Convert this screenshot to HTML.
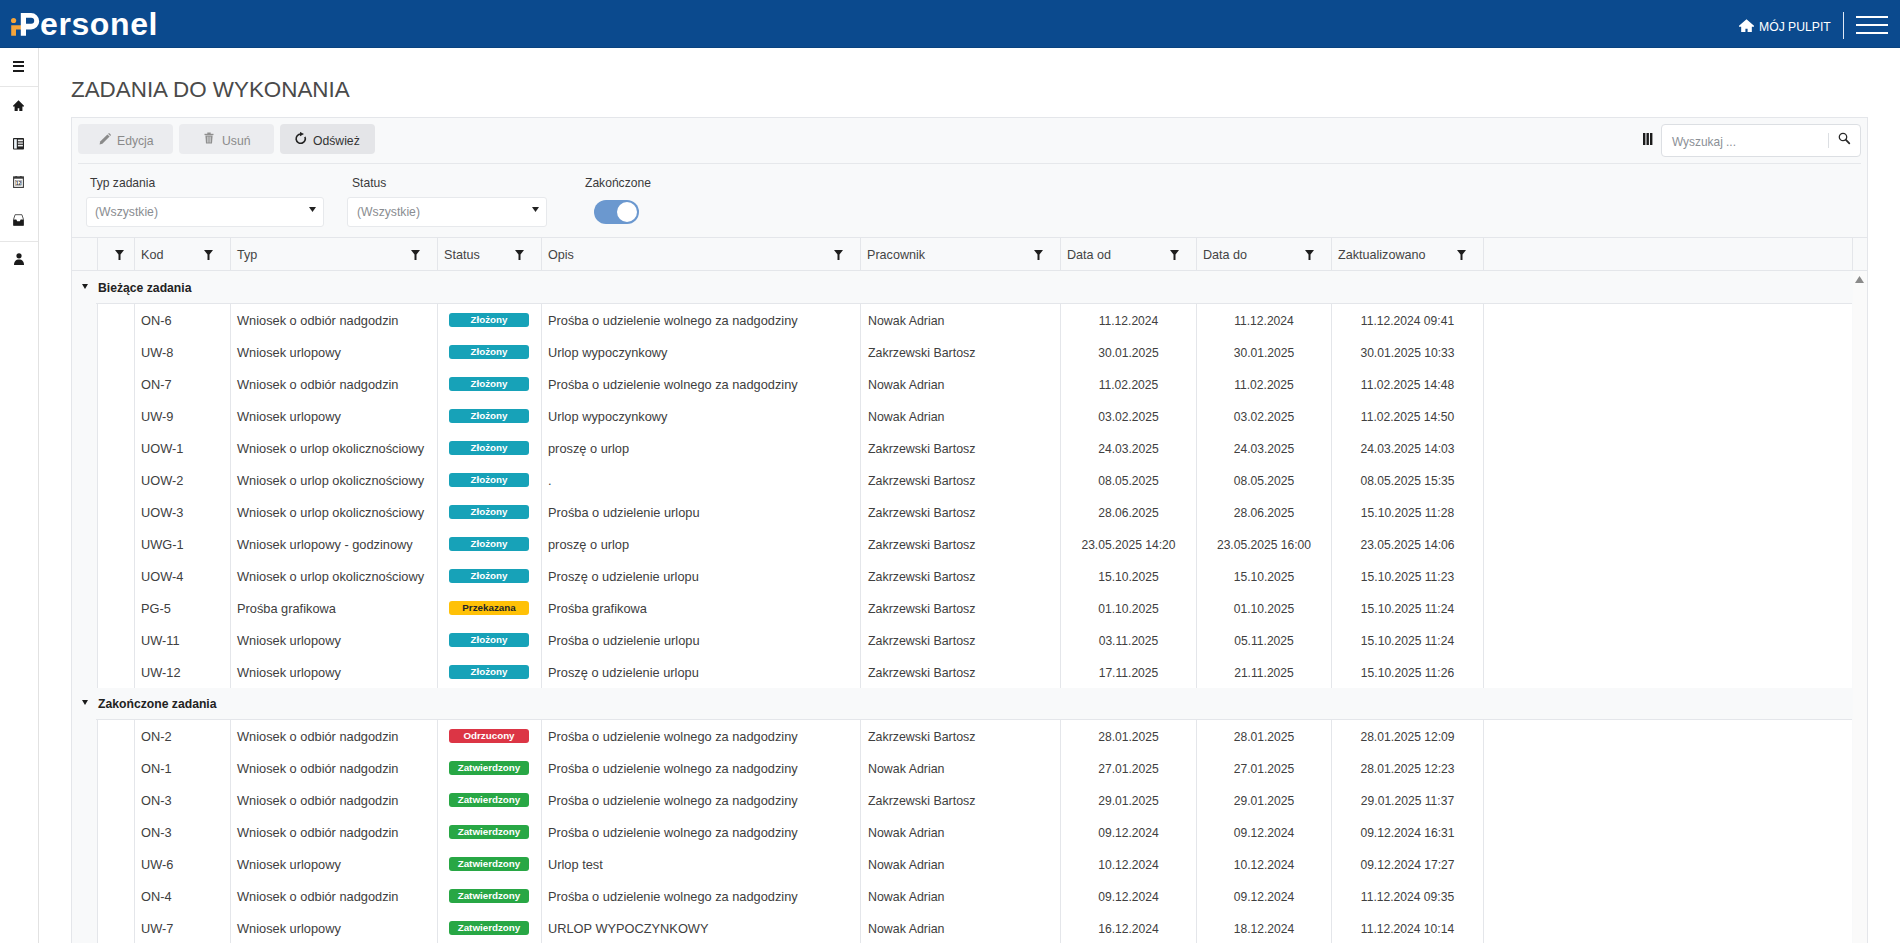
<!DOCTYPE html><html><head><meta charset="utf-8"><title>Zadania do wykonania</title><style>
*{box-sizing:border-box}
svg{display:block}
html,body{margin:0;padding:0}
body{width:1900px;height:943px;overflow:hidden;position:relative;background:#fff;font-family:"Liberation Sans",sans-serif;color:#333}
.a{position:absolute}
.hdr{left:0;top:0;width:1900px;height:48px;background:#0b4a8e;border-bottom:1px solid #0a437f}
.logo{left:40px;top:4px;font-size:32px;font-weight:700;color:#fff;line-height:40px;letter-spacing:0.6px}
.side{left:0;top:48px;width:39px;height:895px;border-right:1px solid #e2e2e2;background:#fff}
.hl{height:1px;background:#e6e6e6}
.vl{width:1px;background:#e4e6ea}
.title{left:71px;top:74.5px;font-size:22.4px;letter-spacing:0px;color:#4a4a4a;line-height:30px;white-space:nowrap}
.panel{left:71px;top:117px;width:1797px;height:840px;background:#f8f9fa;border:1px solid #e4e6ea}
.btn{top:124px;width:95px;height:30px;background:#e9eaed;border-radius:4px}
.btxt{font-size:12.2px;line-height:30px;white-space:nowrap}
.lbl{font-size:12.1px;color:#3a3a3a;line-height:16px;white-space:nowrap}
.sel{top:197px;height:30px;background:#fff;border:1px solid #e7e9ec;border-radius:3px}
.selt{font-size:12.2px;color:#8a8d91;line-height:28px;white-space:nowrap}
.ht{font-size:12.6px;color:#444;line-height:32px;white-space:nowrap}
.dt{font-size:12.8px;color:#404040;line-height:32px;white-space:nowrap}
.dd{font-size:12.1px;color:#404040;line-height:32px;white-space:nowrap;text-align:center}
.gt{font-size:12.2px;font-weight:700;color:#222;line-height:32px;white-space:nowrap}
.bd{height:14px;width:80px;border-radius:3px;font-size:9.8px;font-weight:700;text-align:center;line-height:14px;white-space:nowrap}
</style></head><body>
<div class="a hdr"></div>
<svg class="a" style="left:0;top:0" width="45" height="48" viewBox="0 0 45 48"><circle cx="13.6" cy="20.5" r="2.6" fill="#f5a43a"/><path d="M11.2 25.3H21V29.4H16V35.8H11.2Z" fill="#f5a43a"/><path fill-rule="evenodd" d="M20.8 13H31A8.2 8.2 0 0 1 31 29.4H26V35.8H20.8ZM26 17.7H31.2A3 3 0 0 1 31.2 23.7H26Z" fill="#fff"/></svg>
<div class="a logo">ersonel</div>
<svg class="a" style="left:1739px;top:19px" width="15" height="13" viewBox="0 0 11 11" preserveAspectRatio="none"><path d="M5.5 0.3L11 5.8V6.6H9.4V11H6.3V8.2H4.7V11H1.6V6.6H0V5.8Z" fill="#fff"/></svg>
<div class="a" style="left:1759px;top:17px;font-size:12.2px;color:#fff;line-height:20px;white-space:nowrap">MÓJ PULPIT</div>
<div class="a" style="left:1843px;top:12px;width:1px;height:27px;background:#dfe9f5"></div>
<div class="a" style="left:1856px;top:16px;width:32px;height:2px;background:#fff"></div>
<div class="a" style="left:1856px;top:24px;width:32px;height:2px;background:#fff"></div>
<div class="a" style="left:1856px;top:32px;width:32px;height:2px;background:#fff"></div>
<div class="a side"></div>
<div class="a hl" style="left:0;top:86px;width:38px"></div>
<div class="a hl" style="left:0;top:241px;width:38px"></div>
<div class="a" style="left:13px;top:61px;width:11px;height:2px;background:#1b1b1b"></div>
<div class="a" style="left:13px;top:65px;width:11px;height:2px;background:#1b1b1b"></div>
<div class="a" style="left:13px;top:70px;width:11px;height:2px;background:#1b1b1b"></div>
<svg class="a" style="left:13px;top:100px" width="11" height="11" viewBox="0 0 11 11"><path d="M5.5 0.3L11 5.8V6.6H9.4V11H6.3V8.2H4.7V11H1.6V6.6H0V5.8Z" fill="#1b1b1b"/></svg>
<svg class="a" style="left:13px;top:138px" width="11" height="12" viewBox="0 0 11 12"><rect x="0" y="0" width="11" height="11.6" rx="0.8" fill="#222"/><rect x="1.1" y="1.2" width="2.7" height="9.4" fill="#eef6fb"/><rect x="4.9" y="1.6" width="5" height="1.7" fill="#f4f4f4"/><rect x="4.9" y="4.4" width="5" height="1.3" fill="#f0f0f0"/><rect x="4.9" y="6.8" width="5" height="1.6" fill="#f0f0f0"/></svg>
<svg class="a" style="left:13px;top:175px" width="11" height="13" viewBox="0 0 11 13"><rect x="0.6" y="1.9" width="9.8" height="10.5" fill="none" stroke="#3a3a3a" stroke-width="1.1"/><rect x="0.6" y="1.9" width="9.8" height="1.8" fill="#3a3a3a"/><circle cx="3.2" cy="2" r="1.1" fill="#3a3a3a"/><circle cx="7.8" cy="2" r="1.1" fill="#3a3a3a"/><rect x="2.3" y="5.6" width="6.4" height="5" fill="none" stroke="#777" stroke-width="0.5"/><text x="5.5" y="10.2" font-size="5" font-weight="700" font-family="Liberation Sans" text-anchor="middle" fill="#333">12</text></svg>
<svg class="a" style="left:13px;top:214px" width="11" height="12" viewBox="0 0 11 12"><path d="M2.1 0.7H8.9L10.5 5.5V11.4H0.5V5.5Z" fill="none" stroke="#444" stroke-width="0.9"/><path d="M0.5 5.5H3.3L4.2 7.2H6.8L7.7 5.5H10.5V11.4H0.5Z" fill="#1b1b1b"/></svg>
<svg class="a" style="left:14px;top:253px" width="10" height="12" viewBox="0 0 10 12"><circle cx="5" cy="2.8" r="2.6" fill="#1b1b1b"/><path d="M0 12C0 8.5 1.8 6.5 5 6.5S10 8.5 10 12Z" fill="#1b1b1b"/></svg>
<div class="a title">ZADANIA DO WYKONANIA</div>
<div class="a panel"></div>
<div class="a btn" style="left:78px;background:#ebecef"></div>
<div class="a btn" style="left:179px;background:#ebecef"></div>
<div class="a btn" style="left:280px;background:#e4e5e8"></div>
<svg class="a" style="left:99px;top:133px" width="12" height="12" viewBox="0 0 12 12"><path d="M0.6 11.4L1.2 8.6L8.4 1.4L10.6 3.6L3.4 10.8Z" fill="#8a8a8a"/><path d="M9.1 0.7L9.6 0.3Q10 0 10.4 0.3L11.7 1.6Q12 2 11.7 2.4L11.3 2.9Z" fill="#8a8a8a"/></svg>
<div class="a btxt" style="left:117px;top:126px;color:#8a8a8a">Edycja</div>
<svg class="a" style="left:204px;top:132px" width="10" height="12" viewBox="0 0 10 12"><rect x="0.5" y="1.8" width="9" height="1.3" fill="#8f8f8f"/><rect x="3.3" y="0.5" width="3.4" height="1.6" fill="#8f8f8f"/><path d="M1.4 3.6H8.6L8 11.5H2Z" fill="#8f8f8f"/><path d="M3.6 4.6V10.5M5 4.6V10.5M6.4 4.6V10.5" stroke="#ebecef" stroke-width="0.6"/></svg>
<div class="a btxt" style="left:222px;top:126px;color:#8a8a8a">Usuń</div>
<svg class="a" style="left:294px;top:132px" width="14" height="14" viewBox="0 0 14 14"><path d="M6.7 2.1A4.6 4.6 0 1 0 10.9 4.8" fill="none" stroke="#222" stroke-width="1.6"/><path d="M6 -0.1L10 2.1L6 4.3Z" fill="#222"/></svg>
<div class="a btxt" style="left:313px;top:126px;color:#333">Odśwież</div>
<svg class="a" style="left:1643px;top:133px" width="10" height="12" viewBox="0 0 10 12"><rect x="0" y="0" width="2.4" height="12" fill="#1b1b1b"/><rect x="3.5" y="0" width="2.4" height="12" fill="#1b1b1b"/><rect x="7" y="0" width="2.4" height="12" fill="#1b1b1b"/></svg>
<div class="a" style="left:1661px;top:124px;width:200px;height:33px;background:#fff;border:1px solid #dcdfe3;border-radius:4px"></div>
<div class="a" style="left:1672px;top:132px;font-size:11.9px;color:#8b9096;line-height:20px;white-space:nowrap">Wyszukaj ...</div>
<div class="a" style="left:1828px;top:133px;width:1px;height:15px;background:#dcdfe3"></div>
<svg class="a" style="left:1838px;top:132px" width="13" height="13" viewBox="0 0 13 13"><circle cx="5" cy="5" r="3.7" fill="none" stroke="#2a2a2a" stroke-width="1.3"/><path d="M7.7 7.7L11.3 11.3" stroke="#2a2a2a" stroke-width="1.8" stroke-linecap="round"/></svg>
<div class="a hl" style="left:78px;top:163px;width:1783px;background:#e6e8eb"></div>
<div class="a lbl" style="left:90px;top:175px">Typ zadania</div>
<div class="a lbl" style="left:352px;top:175px">Status</div>
<div class="a lbl" style="left:585px;top:175px">Zakończone</div>
<div class="a sel" style="left:86px;width:238px"></div>
<div class="a selt" style="left:95px;top:198px">(Wszystkie)</div>
<svg class="a" style="left:309px;top:207px" width="7" height="5" viewBox="0 0 7 5"><path d="M0 0H7L3.5 5Z" fill="#222"/></svg>
<div class="a sel" style="left:347px;width:200px"></div>
<div class="a selt" style="left:357px;top:198px">(Wszystkie)</div>
<svg class="a" style="left:532px;top:207px" width="7" height="5" viewBox="0 0 7 5"><path d="M0 0H7L3.5 5Z" fill="#222"/></svg>
<div class="a" style="left:594px;top:200px;width:45px;height:24px;border-radius:12px;background:#6b98cf"></div>
<div class="a" style="left:617px;top:202px;width:20px;height:20px;border-radius:10px;background:#fff"></div>
<div class="a hl" style="left:72px;top:237px;width:1795px;background:#e4e6ea"></div>
<div class="a hl" style="left:72px;top:270px;width:1795px;background:#e4e6ea"></div>
<div class="a vl" style="left:97px;top:238px;height:32px"></div>
<div class="a vl" style="left:134px;top:238px;height:32px"></div>
<div class="a vl" style="left:230px;top:238px;height:32px"></div>
<div class="a vl" style="left:437px;top:238px;height:32px"></div>
<div class="a vl" style="left:541px;top:238px;height:32px"></div>
<div class="a vl" style="left:860px;top:238px;height:32px"></div>
<div class="a vl" style="left:1060px;top:238px;height:32px"></div>
<div class="a vl" style="left:1196px;top:238px;height:32px"></div>
<div class="a vl" style="left:1331px;top:238px;height:32px"></div>
<div class="a vl" style="left:1483px;top:238px;height:32px"></div>
<div class="a vl" style="left:1852px;top:238px;height:32px"></div>
<div class="a" style="left:115px;top:250px"><svg width="9" height="10" viewBox="0 0 9 10"><path d="M0 0H9L5.5 4.4V10H3.5V4.4Z" fill="#1e1e1e"/></svg></div>
<div class="a ht" style="left:141px;top:239px">Kod</div>
<div class="a" style="left:204px;top:250px"><svg width="9" height="10" viewBox="0 0 9 10"><path d="M0 0H9L5.5 4.4V10H3.5V4.4Z" fill="#1e1e1e"/></svg></div>
<div class="a ht" style="left:237px;top:239px">Typ</div>
<div class="a" style="left:411px;top:250px"><svg width="9" height="10" viewBox="0 0 9 10"><path d="M0 0H9L5.5 4.4V10H3.5V4.4Z" fill="#1e1e1e"/></svg></div>
<div class="a ht" style="left:444px;top:239px">Status</div>
<div class="a" style="left:515px;top:250px"><svg width="9" height="10" viewBox="0 0 9 10"><path d="M0 0H9L5.5 4.4V10H3.5V4.4Z" fill="#1e1e1e"/></svg></div>
<div class="a ht" style="left:548px;top:239px">Opis</div>
<div class="a" style="left:834px;top:250px"><svg width="9" height="10" viewBox="0 0 9 10"><path d="M0 0H9L5.5 4.4V10H3.5V4.4Z" fill="#1e1e1e"/></svg></div>
<div class="a ht" style="left:867px;top:239px">Pracownik</div>
<div class="a" style="left:1034px;top:250px"><svg width="9" height="10" viewBox="0 0 9 10"><path d="M0 0H9L5.5 4.4V10H3.5V4.4Z" fill="#1e1e1e"/></svg></div>
<div class="a ht" style="left:1067px;top:239px">Data od</div>
<div class="a" style="left:1170px;top:250px"><svg width="9" height="10" viewBox="0 0 9 10"><path d="M0 0H9L5.5 4.4V10H3.5V4.4Z" fill="#1e1e1e"/></svg></div>
<div class="a ht" style="left:1203px;top:239px">Data do</div>
<div class="a" style="left:1305px;top:250px"><svg width="9" height="10" viewBox="0 0 9 10"><path d="M0 0H9L5.5 4.4V10H3.5V4.4Z" fill="#1e1e1e"/></svg></div>
<div class="a ht" style="left:1338px;top:239px">Zaktualizowano</div>
<div class="a" style="left:1457px;top:250px"><svg width="9" height="10" viewBox="0 0 9 10"><path d="M0 0H9L5.5 4.4V10H3.5V4.4Z" fill="#1e1e1e"/></svg></div>
<div class="a hl" style="left:96px;top:303px;width:1756px;background:#e4e6ea"></div>
<svg class="a" style="left:82px;top:284px" width="6" height="5" viewBox="0 0 6 5"><path d="M0 0H6L3 5Z" fill="#1b1b1b"/></svg>
<div class="a gt" style="left:98px;top:272px">Bieżące zadania</div>
<div class="a" style="left:98px;top:304px;width:1754px;height:384px;background:#fff"></div>
<div class="a vl" style="left:97px;top:304px;height:384px"></div>
<div class="a vl" style="left:134px;top:304px;height:384px"></div>
<div class="a vl" style="left:230px;top:304px;height:384px"></div>
<div class="a vl" style="left:437px;top:304px;height:384px"></div>
<div class="a vl" style="left:541px;top:304px;height:384px"></div>
<div class="a vl" style="left:860px;top:304px;height:384px"></div>
<div class="a vl" style="left:1060px;top:304px;height:384px"></div>
<div class="a vl" style="left:1196px;top:304px;height:384px"></div>
<div class="a vl" style="left:1331px;top:304px;height:384px"></div>
<div class="a vl" style="left:1483px;top:304px;height:384px"></div>
<div class="a dt" style="left:141px;top:305px">ON-6</div>
<div class="a dt" style="left:237px;top:305px">Wniosek o odbiór nadgodzin</div>
<div class="a bd" style="left:449px;top:313px;background:#17a2b8;color:#fff">Złożony</div>
<div class="a dt" style="left:548px;top:305px">Prośba o udzielenie wolnego za nadgodziny</div>
<div class="a dt" style="left:868px;top:305px;font-size:12.4px">Nowak Adrian</div>
<div class="a dd" style="left:1061px;width:135px;top:305px">11.12.2024</div>
<div class="a dd" style="left:1197px;width:134px;top:305px">11.12.2024</div>
<div class="a dd" style="left:1332px;width:151px;top:305px">11.12.2024 09:41</div>
<div class="a dt" style="left:141px;top:337px">UW-8</div>
<div class="a dt" style="left:237px;top:337px">Wniosek urlopowy</div>
<div class="a bd" style="left:449px;top:345px;background:#17a2b8;color:#fff">Złożony</div>
<div class="a dt" style="left:548px;top:337px">Urlop wypoczynkowy</div>
<div class="a dt" style="left:868px;top:337px;font-size:12.4px">Zakrzewski Bartosz</div>
<div class="a dd" style="left:1061px;width:135px;top:337px">30.01.2025</div>
<div class="a dd" style="left:1197px;width:134px;top:337px">30.01.2025</div>
<div class="a dd" style="left:1332px;width:151px;top:337px">30.01.2025 10:33</div>
<div class="a dt" style="left:141px;top:369px">ON-7</div>
<div class="a dt" style="left:237px;top:369px">Wniosek o odbiór nadgodzin</div>
<div class="a bd" style="left:449px;top:377px;background:#17a2b8;color:#fff">Złożony</div>
<div class="a dt" style="left:548px;top:369px">Prośba o udzielenie wolnego za nadgodziny</div>
<div class="a dt" style="left:868px;top:369px;font-size:12.4px">Nowak Adrian</div>
<div class="a dd" style="left:1061px;width:135px;top:369px">11.02.2025</div>
<div class="a dd" style="left:1197px;width:134px;top:369px">11.02.2025</div>
<div class="a dd" style="left:1332px;width:151px;top:369px">11.02.2025 14:48</div>
<div class="a dt" style="left:141px;top:401px">UW-9</div>
<div class="a dt" style="left:237px;top:401px">Wniosek urlopowy</div>
<div class="a bd" style="left:449px;top:409px;background:#17a2b8;color:#fff">Złożony</div>
<div class="a dt" style="left:548px;top:401px">Urlop wypoczynkowy</div>
<div class="a dt" style="left:868px;top:401px;font-size:12.4px">Nowak Adrian</div>
<div class="a dd" style="left:1061px;width:135px;top:401px">03.02.2025</div>
<div class="a dd" style="left:1197px;width:134px;top:401px">03.02.2025</div>
<div class="a dd" style="left:1332px;width:151px;top:401px">11.02.2025 14:50</div>
<div class="a dt" style="left:141px;top:433px">UOW-1</div>
<div class="a dt" style="left:237px;top:433px">Wniosek o urlop okolicznościowy</div>
<div class="a bd" style="left:449px;top:441px;background:#17a2b8;color:#fff">Złożony</div>
<div class="a dt" style="left:548px;top:433px">proszę o urlop</div>
<div class="a dt" style="left:868px;top:433px;font-size:12.4px">Zakrzewski Bartosz</div>
<div class="a dd" style="left:1061px;width:135px;top:433px">24.03.2025</div>
<div class="a dd" style="left:1197px;width:134px;top:433px">24.03.2025</div>
<div class="a dd" style="left:1332px;width:151px;top:433px">24.03.2025 14:03</div>
<div class="a dt" style="left:141px;top:465px">UOW-2</div>
<div class="a dt" style="left:237px;top:465px">Wniosek o urlop okolicznościowy</div>
<div class="a bd" style="left:449px;top:473px;background:#17a2b8;color:#fff">Złożony</div>
<div class="a dt" style="left:548px;top:465px">.</div>
<div class="a dt" style="left:868px;top:465px;font-size:12.4px">Zakrzewski Bartosz</div>
<div class="a dd" style="left:1061px;width:135px;top:465px">08.05.2025</div>
<div class="a dd" style="left:1197px;width:134px;top:465px">08.05.2025</div>
<div class="a dd" style="left:1332px;width:151px;top:465px">08.05.2025 15:35</div>
<div class="a dt" style="left:141px;top:497px">UOW-3</div>
<div class="a dt" style="left:237px;top:497px">Wniosek o urlop okolicznościowy</div>
<div class="a bd" style="left:449px;top:505px;background:#17a2b8;color:#fff">Złożony</div>
<div class="a dt" style="left:548px;top:497px">Prośba o udzielenie urlopu</div>
<div class="a dt" style="left:868px;top:497px;font-size:12.4px">Zakrzewski Bartosz</div>
<div class="a dd" style="left:1061px;width:135px;top:497px">28.06.2025</div>
<div class="a dd" style="left:1197px;width:134px;top:497px">28.06.2025</div>
<div class="a dd" style="left:1332px;width:151px;top:497px">15.10.2025 11:28</div>
<div class="a dt" style="left:141px;top:529px">UWG-1</div>
<div class="a dt" style="left:237px;top:529px">Wniosek urlopowy - godzinowy</div>
<div class="a bd" style="left:449px;top:537px;background:#17a2b8;color:#fff">Złożony</div>
<div class="a dt" style="left:548px;top:529px">proszę o urlop</div>
<div class="a dt" style="left:868px;top:529px;font-size:12.4px">Zakrzewski Bartosz</div>
<div class="a dd" style="left:1061px;width:135px;top:529px">23.05.2025 14:20</div>
<div class="a dd" style="left:1197px;width:134px;top:529px">23.05.2025 16:00</div>
<div class="a dd" style="left:1332px;width:151px;top:529px">23.05.2025 14:06</div>
<div class="a dt" style="left:141px;top:561px">UOW-4</div>
<div class="a dt" style="left:237px;top:561px">Wniosek o urlop okolicznościowy</div>
<div class="a bd" style="left:449px;top:569px;background:#17a2b8;color:#fff">Złożony</div>
<div class="a dt" style="left:548px;top:561px">Proszę o udzielenie urlopu</div>
<div class="a dt" style="left:868px;top:561px;font-size:12.4px">Zakrzewski Bartosz</div>
<div class="a dd" style="left:1061px;width:135px;top:561px">15.10.2025</div>
<div class="a dd" style="left:1197px;width:134px;top:561px">15.10.2025</div>
<div class="a dd" style="left:1332px;width:151px;top:561px">15.10.2025 11:23</div>
<div class="a dt" style="left:141px;top:593px">PG-5</div>
<div class="a dt" style="left:237px;top:593px">Prośba grafikowa</div>
<div class="a bd" style="left:449px;top:601px;background:#ffc107;color:#212529">Przekazana</div>
<div class="a dt" style="left:548px;top:593px">Prośba grafikowa</div>
<div class="a dt" style="left:868px;top:593px;font-size:12.4px">Zakrzewski Bartosz</div>
<div class="a dd" style="left:1061px;width:135px;top:593px">01.10.2025</div>
<div class="a dd" style="left:1197px;width:134px;top:593px">01.10.2025</div>
<div class="a dd" style="left:1332px;width:151px;top:593px">15.10.2025 11:24</div>
<div class="a dt" style="left:141px;top:625px">UW-11</div>
<div class="a dt" style="left:237px;top:625px">Wniosek urlopowy</div>
<div class="a bd" style="left:449px;top:633px;background:#17a2b8;color:#fff">Złożony</div>
<div class="a dt" style="left:548px;top:625px">Prośba o udzielenie urlopu</div>
<div class="a dt" style="left:868px;top:625px;font-size:12.4px">Zakrzewski Bartosz</div>
<div class="a dd" style="left:1061px;width:135px;top:625px">03.11.2025</div>
<div class="a dd" style="left:1197px;width:134px;top:625px">05.11.2025</div>
<div class="a dd" style="left:1332px;width:151px;top:625px">15.10.2025 11:24</div>
<div class="a dt" style="left:141px;top:657px">UW-12</div>
<div class="a dt" style="left:237px;top:657px">Wniosek urlopowy</div>
<div class="a bd" style="left:449px;top:665px;background:#17a2b8;color:#fff">Złożony</div>
<div class="a dt" style="left:548px;top:657px">Proszę o udzielenie urlopu</div>
<div class="a dt" style="left:868px;top:657px;font-size:12.4px">Zakrzewski Bartosz</div>
<div class="a dd" style="left:1061px;width:135px;top:657px">17.11.2025</div>
<div class="a dd" style="left:1197px;width:134px;top:657px">21.11.2025</div>
<div class="a dd" style="left:1332px;width:151px;top:657px">15.10.2025 11:26</div>
<div class="a hl" style="left:96px;top:719px;width:1756px;background:#e4e6ea"></div>
<svg class="a" style="left:82px;top:700px" width="6" height="5" viewBox="0 0 6 5"><path d="M0 0H6L3 5Z" fill="#1b1b1b"/></svg>
<div class="a gt" style="left:98px;top:688px">Zakończone zadania</div>
<div class="a" style="left:98px;top:720px;width:1754px;height:224px;background:#fff"></div>
<div class="a vl" style="left:97px;top:720px;height:224px"></div>
<div class="a vl" style="left:134px;top:720px;height:224px"></div>
<div class="a vl" style="left:230px;top:720px;height:224px"></div>
<div class="a vl" style="left:437px;top:720px;height:224px"></div>
<div class="a vl" style="left:541px;top:720px;height:224px"></div>
<div class="a vl" style="left:860px;top:720px;height:224px"></div>
<div class="a vl" style="left:1060px;top:720px;height:224px"></div>
<div class="a vl" style="left:1196px;top:720px;height:224px"></div>
<div class="a vl" style="left:1331px;top:720px;height:224px"></div>
<div class="a vl" style="left:1483px;top:720px;height:224px"></div>
<div class="a dt" style="left:141px;top:721px">ON-2</div>
<div class="a dt" style="left:237px;top:721px">Wniosek o odbiór nadgodzin</div>
<div class="a bd" style="left:449px;top:729px;background:#dc3545;color:#fff">Odrzucony</div>
<div class="a dt" style="left:548px;top:721px">Prośba o udzielenie wolnego za nadgodziny</div>
<div class="a dt" style="left:868px;top:721px;font-size:12.4px">Zakrzewski Bartosz</div>
<div class="a dd" style="left:1061px;width:135px;top:721px">28.01.2025</div>
<div class="a dd" style="left:1197px;width:134px;top:721px">28.01.2025</div>
<div class="a dd" style="left:1332px;width:151px;top:721px">28.01.2025 12:09</div>
<div class="a dt" style="left:141px;top:753px">ON-1</div>
<div class="a dt" style="left:237px;top:753px">Wniosek o odbiór nadgodzin</div>
<div class="a bd" style="left:449px;top:761px;background:#28a745;color:#fff">Zatwierdzony</div>
<div class="a dt" style="left:548px;top:753px">Prośba o udzielenie wolnego za nadgodziny</div>
<div class="a dt" style="left:868px;top:753px;font-size:12.4px">Nowak Adrian</div>
<div class="a dd" style="left:1061px;width:135px;top:753px">27.01.2025</div>
<div class="a dd" style="left:1197px;width:134px;top:753px">27.01.2025</div>
<div class="a dd" style="left:1332px;width:151px;top:753px">28.01.2025 12:23</div>
<div class="a dt" style="left:141px;top:785px">ON-3</div>
<div class="a dt" style="left:237px;top:785px">Wniosek o odbiór nadgodzin</div>
<div class="a bd" style="left:449px;top:793px;background:#28a745;color:#fff">Zatwierdzony</div>
<div class="a dt" style="left:548px;top:785px">Prośba o udzielenie wolnego za nadgodziny</div>
<div class="a dt" style="left:868px;top:785px;font-size:12.4px">Zakrzewski Bartosz</div>
<div class="a dd" style="left:1061px;width:135px;top:785px">29.01.2025</div>
<div class="a dd" style="left:1197px;width:134px;top:785px">29.01.2025</div>
<div class="a dd" style="left:1332px;width:151px;top:785px">29.01.2025 11:37</div>
<div class="a dt" style="left:141px;top:817px">ON-3</div>
<div class="a dt" style="left:237px;top:817px">Wniosek o odbiór nadgodzin</div>
<div class="a bd" style="left:449px;top:825px;background:#28a745;color:#fff">Zatwierdzony</div>
<div class="a dt" style="left:548px;top:817px">Prośba o udzielenie wolnego za nadgodziny</div>
<div class="a dt" style="left:868px;top:817px;font-size:12.4px">Nowak Adrian</div>
<div class="a dd" style="left:1061px;width:135px;top:817px">09.12.2024</div>
<div class="a dd" style="left:1197px;width:134px;top:817px">09.12.2024</div>
<div class="a dd" style="left:1332px;width:151px;top:817px">09.12.2024 16:31</div>
<div class="a dt" style="left:141px;top:849px">UW-6</div>
<div class="a dt" style="left:237px;top:849px">Wniosek urlopowy</div>
<div class="a bd" style="left:449px;top:857px;background:#28a745;color:#fff">Zatwierdzony</div>
<div class="a dt" style="left:548px;top:849px">Urlop test</div>
<div class="a dt" style="left:868px;top:849px;font-size:12.4px">Nowak Adrian</div>
<div class="a dd" style="left:1061px;width:135px;top:849px">10.12.2024</div>
<div class="a dd" style="left:1197px;width:134px;top:849px">10.12.2024</div>
<div class="a dd" style="left:1332px;width:151px;top:849px">09.12.2024 17:27</div>
<div class="a dt" style="left:141px;top:881px">ON-4</div>
<div class="a dt" style="left:237px;top:881px">Wniosek o odbiór nadgodzin</div>
<div class="a bd" style="left:449px;top:889px;background:#28a745;color:#fff">Zatwierdzony</div>
<div class="a dt" style="left:548px;top:881px">Prośba o udzielenie wolnego za nadgodziny</div>
<div class="a dt" style="left:868px;top:881px;font-size:12.4px">Nowak Adrian</div>
<div class="a dd" style="left:1061px;width:135px;top:881px">09.12.2024</div>
<div class="a dd" style="left:1197px;width:134px;top:881px">09.12.2024</div>
<div class="a dd" style="left:1332px;width:151px;top:881px">11.12.2024 09:35</div>
<div class="a dt" style="left:141px;top:913px">UW-7</div>
<div class="a dt" style="left:237px;top:913px">Wniosek urlopowy</div>
<div class="a bd" style="left:449px;top:921px;background:#28a745;color:#fff">Zatwierdzony</div>
<div class="a dt" style="left:548px;top:913px">URLOP WYPOCZYNKOWY</div>
<div class="a dt" style="left:868px;top:913px;font-size:12.4px">Nowak Adrian</div>
<div class="a dd" style="left:1061px;width:135px;top:913px">16.12.2024</div>
<div class="a dd" style="left:1197px;width:134px;top:913px">18.12.2024</div>
<div class="a dd" style="left:1332px;width:151px;top:913px">11.12.2024 10:14</div>
<div class="a" style="left:1853px;top:271px;width:14px;height:672px;background:#fafafa"></div>
<svg class="a" style="left:1855px;top:276px" width="9" height="7" viewBox="0 0 9 7"><path d="M0 7L4.5 0L9 7Z" fill="#8a8a8a"/></svg>
</body></html>
